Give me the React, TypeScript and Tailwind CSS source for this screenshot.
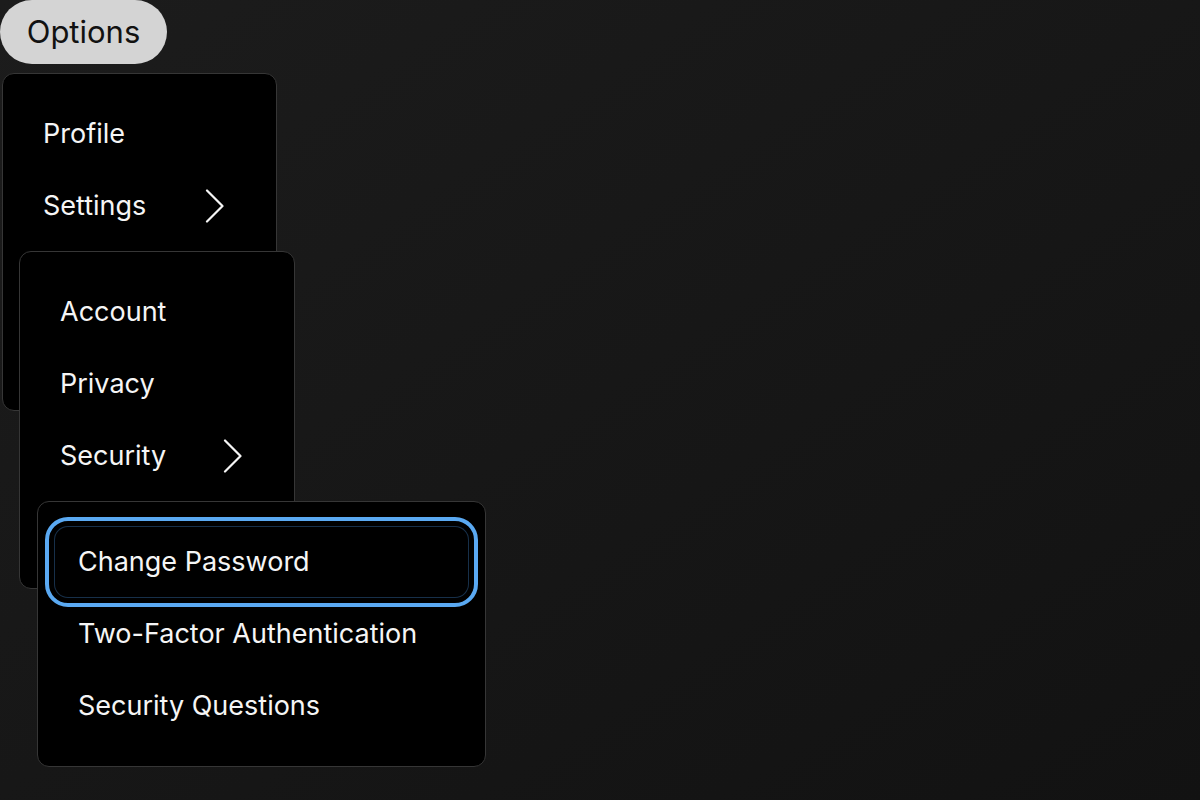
import React from 'react';

type Item = { label: string; sub?: boolean; focused?: boolean };

const mainItems: Item[] = [
  { label: 'Profile' },
  { label: 'Settings', sub: true },
  { label: 'Billing' },
  { label: 'Sign out' },
];
const settingsItems: Item[] = [
  { label: 'Account' },
  { label: 'Privacy' },
  { label: 'Security', sub: true },
  { label: 'Notifications' },
];
const securityItems: Item[] = [
  { label: 'Change Password', focused: true },
  { label: 'Two-Factor Authentication' },
  { label: 'Security Questions' },
];

function Chevron() {
  return (
    <svg width="20" height="34" viewBox="0 0 20 34" fill="none" className="shrink-0">
      <polyline
        points="2,1.5 17.5,17 2,32.5"
        stroke="#f5f5f5"
        strokeWidth="2.2"
        strokeLinecap="round"
        strokeLinejoin="round"
      />
    </svg>
  );
}

function Menu({ items, className }: { items: Item[]; className: string }) {
  return (
    <div
      className={
        'absolute rounded-[12px] border border-[#363636] bg-black px-4 py-6 ' + className
      }
    >
      {items.map((it) => (
        <div
          key={it.label}
          className={
            'flex h-[72px] items-center justify-between rounded-[14px] pl-[24px] pr-[35px] text-[27px] text-[#f5f5f5] ' +
            (it.focused
              ? 'outline-4 outline-offset-[5px] outline-[#5aa9f2] shadow-[inset_0_0_0_1px_#17304a]'
              : '')
          }
        >
          <span className="whitespace-nowrap">{it.label}</span>
          {it.sub && <Chevron />}
        </div>
      ))}
    </div>
  );
}

export default function App() {
  return (
    <div
      className="relative h-[800px] w-[1200px] overflow-hidden bg-gradient-to-br from-[#1c1c1c] to-[#121212]"
      style={{ fontFamily: 'Inter, "Noto Sans", sans-serif' }}
    >
      <button className="flex h-[64px] w-[167px] items-center justify-center rounded-full bg-[#d4d4d4] text-[31px] text-[#111]">
        Options
      </button>
      <Menu items={mainItems} className="left-[2px] top-[73px] w-[275px]" />
      <Menu items={settingsItems} className="left-[19px] top-[251px] w-[276px]" />
      <Menu items={securityItems} className="left-[37px] top-[501px] w-[449px]" />
    </div>
  );
}
